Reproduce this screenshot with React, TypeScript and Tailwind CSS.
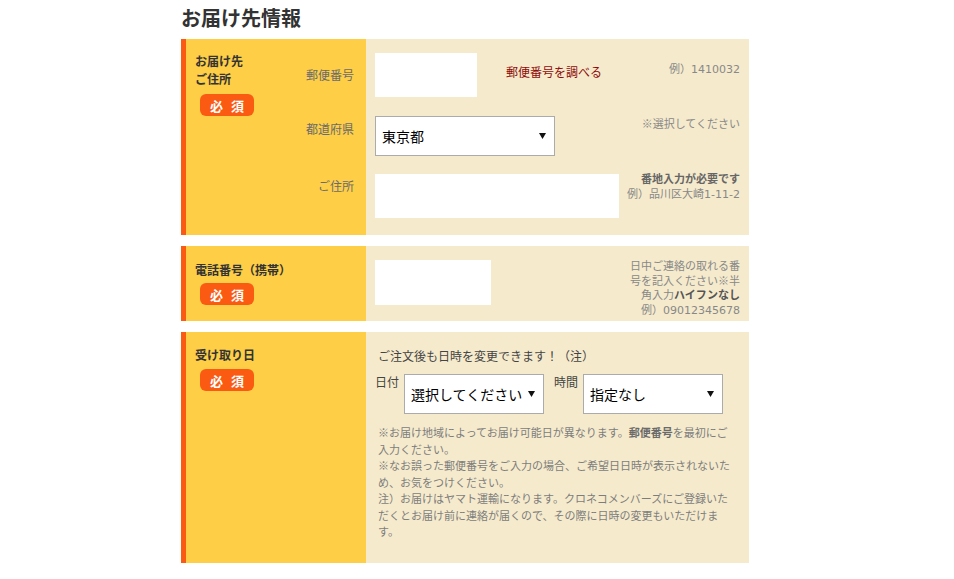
import React from "react";

const Badge = ({ mt }: { mt: string }) => (
  <div
    className={`${mt} ml-[5px] flex h-[22px] w-[54px] items-center justify-center gap-[8px] rounded-[6px] bg-[#fb5a12] text-[13px] font-bold leading-none text-white`}
  >
    <span>必</span>
    <span>須</span>
  </div>
);

const Arrow = () => (
  <svg width="7" height="6" viewBox="0 0 7 6" className="shrink-0">
    <path d="M0 0H7L3.5 6Z" fill="#111" />
  </svg>
);

const Num = ({ children }: { children: React.ReactNode }) => (
  <span className="font-['DejaVu_Sans',sans-serif]">{children}</span>
);

const FakeSelect = ({ w, text, pr }: { w: string; text: string; pr: string }) => (
  <div
    className={`${w} ${pr} flex h-[40px] shrink-0 items-center justify-between border border-[#ababab] bg-white pl-[6px] text-[14px] leading-[18px] text-black`}
  >
    <span>{text}</span>
    <Arrow />
  </div>
);

export default function App() {
  return (
    <div className="h-[579px] w-[954px] bg-white font-['Noto_Sans_CJK_JP',sans-serif] text-[#333]">
      <div className="ml-[181px] w-[568px] pt-[6px]">
        <h2 className="text-[20px] font-bold leading-[24px] text-[#333]">お届け先情報</h2>

        <div className="mt-[9px] flex flex-col gap-[11px]">
          {/* Section 1: address */}
          <section className="flex h-[196px] border-l-[5px] border-[#fb5a12]">
            <div className="flex w-[180px] shrink-0 bg-[#fdce46]">
              <div className="w-[100px] shrink-0 pl-[9px] pt-[13px]">
                <div className="text-[12px] font-bold leading-[18px] text-[#333]">
                  お届け先
                  <br />
                  ご住所
                </div>
                <Badge mt="mt-[6px]" />
              </div>
              <div className="flex flex-1 flex-col pr-[12px] pt-[28px] text-right text-[12px] leading-[16px] text-[#6b6b6b]">
                <div>郵便番号</div>
                <div className="mt-[38px]">都道府県</div>
                <div className="mt-[41px]">ご住所</div>
              </div>
            </div>
            <div className="flex flex-1 flex-col bg-[#f5eacc] px-[9px] pt-[14px]">
              <div className="flex items-start">
                <div className="h-[44px] w-[102px] shrink-0 bg-white" />
                <a className="ml-[29px] mt-[11px] text-[12px] leading-[16px] text-[#8f0a0a]">郵便番号を調べる</a>
                <div className="ml-auto mt-[8px] text-[11px] leading-[15px] text-[#888]">
                  例）<Num>1410032</Num>
                </div>
              </div>
              <div className="mt-[19px] flex items-start">
                <FakeSelect w="w-[180px]" text="東京都" pr="pr-[8px]" />
                <div className="ml-auto text-[11px] leading-[15px] text-[#888]">※選択してください</div>
              </div>
              <div className="mt-[18px] flex items-start">
                <div className="h-[44px] w-[244px] shrink-0 bg-white" />
                <div className="ml-auto -mt-[3px] text-right text-[11px] leading-[15px] text-[#888]">
                  <div className="font-bold text-[#666]">番地入力が必要です</div>
                  <div>
                    例）品川区大崎<Num>1-11-2</Num>
                  </div>
                </div>
              </div>
            </div>
          </section>

          {/* Section 2: phone */}
          <section className="flex h-[75px] border-l-[5px] border-[#fb5a12]">
            <div className="w-[180px] shrink-0 bg-[#fdce46] pl-[9px] pt-[15px]">
              <div className="text-[12px] font-bold leading-[18px] text-[#333]">電話番号（携帯）</div>
              <Badge mt="mt-[4px]" />
            </div>
            <div className="flex flex-1 items-start bg-[#f5eacc] px-[9px] pt-[14px]">
              <div className="h-[45px] w-[116px] shrink-0 bg-white" />
              <div className="ml-auto -mt-[2px] text-right text-[11px] leading-[14.5px] text-[#888]">
                日中ご連絡の取れる番
                <br />
                号を記入ください※半
                <br />
                角入力<b className="font-bold text-[#555]">ハイフンなし</b>
                <br />
                例）<Num>09012345678</Num>
              </div>
            </div>
          </section>

          {/* Section 3: delivery date */}
          <section className="flex h-[231px] border-l-[5px] border-[#fb5a12]">
            <div className="w-[180px] shrink-0 bg-[#fdce46] pl-[9px] pt-[14px]">
              <div className="text-[12px] font-bold leading-[18px] text-[#333]">受け取り日</div>
              <Badge mt="mt-[5px]" />
            </div>
            <div className="flex-1 bg-[#f5eacc] pl-[8px] pt-[16px]">
              <div className="ml-[4px] text-[12px] leading-[16px] text-[#444]">
                ご注文後も日時を変更できます！（注）
              </div>
              <div className="mt-[10px] flex items-start">
                <span className="ml-[1px] text-[12px] leading-[16px] text-[#444]">日付</span>
                <div className="ml-[5px]">
                  <FakeSelect w="w-[140px]" text="選択してください" pr="pr-[8px]" />
                </div>
                <span className="ml-[10px] text-[12px] leading-[16px] text-[#444]">時間</span>
                <div className="ml-[5px]">
                  <FakeSelect w="w-[140px]" text="指定なし" pr="pr-[8px]" />
                </div>
              </div>
              <div className="ml-[4px] mt-[10px] w-[356px] text-[11px] leading-[16.5px] text-[#7d7d7d]">
                <p>
                  ※お届け地域によってお届け可能日が異なります。<b className="font-bold text-[#6a6a6a]">郵便番号</b>を最初にご入力ください。
                </p>
                <p>※なお誤った郵便番号をご入力の場合、ご希望日日時が表示されないため、お気をつけください。</p>
                <p>
                  注）お届けはヤマト運輸になります。クロネコメンバーズにご登録いただくとお届け前に連絡が届くので、その際に日時の変更もいただけます。
                </p>
              </div>
            </div>
          </section>
        </div>
      </div>
    </div>
  );
}
